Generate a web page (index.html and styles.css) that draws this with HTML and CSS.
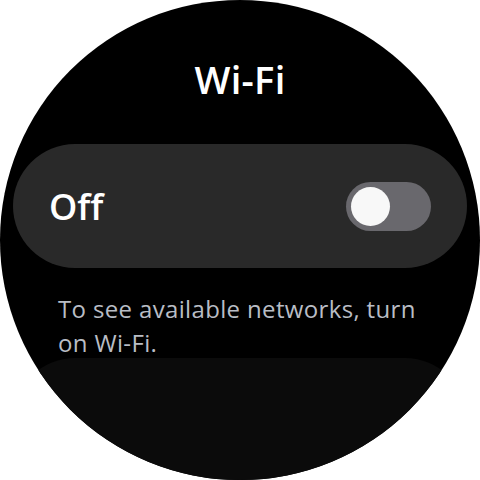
FILE: index.html
```html
<!DOCTYPE html>
<html>
<head>
<meta charset="utf-8">
<link rel="stylesheet" href="styles.css">
</head>
<body>
<div class="watch">
  <h1 class="title">Wi-Fi</h1>
  <div class="card">
    <span class="label">Off</span>
    <div class="toggle"><div class="thumb"></div></div>
  </div>
  <p class="desc">To see available networks, turn on Wi-Fi.</p>
  <div class="next-card"></div>
</div>
</body>
</html>
```
FILE: styles.css
```css
html, body {
  margin: 0;
  padding: 0;
  background: #fff;
}
.watch {
  width: 480px;
  height: 480px;
  border-radius: 50%;
  background: #000;
  overflow: hidden;
  display: flex;
  flex-direction: column;
  align-items: center;
  font-family: "Open Sans", "Roboto", sans-serif;
}
.watch > * {
  flex-shrink: 0;
}
.title {
  margin: 56px 0 0;
  font-size: 38px;
  line-height: 46px;
  font-weight: 600;
  color: #fff;
  letter-spacing: 0.3px;
}
.card {
  box-sizing: border-box;
  width: 454px;
  height: 124px;
  margin-top: 42px;
  border-radius: 62px;
  background: #292929;
  display: flex;
  align-items: center;
  justify-content: space-between;
  padding: 0 36px 0 36px;
}
.label {
  font-size: 36px;
  font-weight: 650;
  color: #fff;
}
.toggle {
  box-sizing: border-box;
  width: 85px;
  height: 49px;
  border-radius: 25px;
  background: #69686d;
  padding: 5px;
  display: flex;
  align-items: center;
}
.thumb {
  width: 39px;
  height: 39px;
  border-radius: 50%;
  background: #f8f8f8;
}
.desc {
  align-self: flex-start;
  margin: 24px 0 0 58px;
  width: 375px;
  font-size: 24px;
  line-height: 34px;
  letter-spacing: 0.35px;
  color: #b9bdc5;
}
.next-card {
  width: 454px;
  height: 160px;
  margin-top: -2px;
  border-radius: 62px 62px 0 0;
  background: #0b0b0b;
}
```
